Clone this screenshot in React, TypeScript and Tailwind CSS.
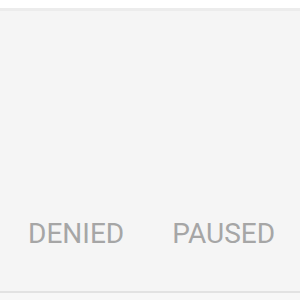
export default function App() {
  const tabs = ['DENIED', 'PAUSED'];
  return (
    <div className="w-[300px] h-[300px] bg-white pt-2 overflow-hidden" style={{ fontFamily: 'Roboto, "Liberation Sans", sans-serif' }}>
      <div className="h-[285px] bg-[#f5f5f5] border-t-[3px] border-t-[#ececec] border-b-2 border-b-[#e2e2e2] flex flex-col justify-end">
        <div className="flex items-center pl-[28px] gap-[48px] pb-[42px]">
          {tabs.map((t) => (
            <span key={t} className="text-[28px] leading-[30px] text-[#a6a6a6]">
              {t}
            </span>
          ))}
        </div>
      </div>
      <div className="h-[7px] bg-[#f7f7f7]" />
    </div>
  );
}
